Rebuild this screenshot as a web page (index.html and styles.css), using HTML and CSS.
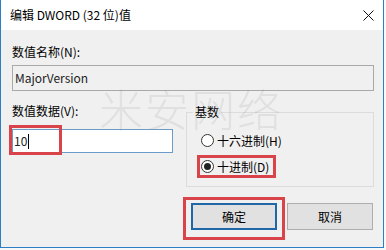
FILE: index.html
```html
<!DOCTYPE html>
<html lang="zh-CN">
<head>
    <meta charset="utf-8">
    <title>编辑 DWORD (32 位)值</title>
    <link rel="stylesheet" href="styles.css">
</head>
<body>
<div class="window">
    <div class="titlebar">
        <span class="title">编辑 DWORD (32 位)值</span>
        <svg class="close" width="11" height="11" viewBox="0 0 11 11">
            <path d="M0.5 0.5 L10.5 10.5 M10.5 0.5 L0.5 10.5" stroke="#111" stroke-width="1" fill="none"/>
        </svg>
    </div>
    <div class="content">
        <label class="field-label">数值名称(N):</label>
        <div class="textbox readonly">MajorVersion</div>
        <div class="lower">
            <div class="data-col">
                <label class="field-label">数值数据(V):</label>
                <div class="textbox focus">10<span class="caret"></span></div>
            </div>
            <fieldset class="base">
                <legend>基数</legend>
                <div class="radio"><span class="circle"></span>十六进制(H)</div>
                <div class="radio checked"><span class="circle"></span>十进制(D)</div>
            </fieldset>
        </div>
        <div class="buttons">
            <button class="btn default">确定</button>
            <button class="btn">取消</button>
        </div>
    </div>
    <div class="watermark">米安网络</div>
    <div class="mark mark-data"></div>
    <div class="mark mark-radio"></div>
    <div class="mark mark-ok"></div>
</div>
</body>
</html>
```
FILE: styles.css
```css
*{
    margin:0;
    padding:0;
    box-sizing:border-box;
}
body{
    background:#f8f8f9;
    font-family:"Noto Sans CJK SC", sans-serif;
    font-size:12px;
    color:#000;
}
.window{
    position:relative;
    width:384px;
    height:248px;
    border:1px solid #2b7fc4;
    border-top:none;
    background:#f0f0f0;
    overflow:hidden;
}
.titlebar{
    height:30px;
    background:#fff;
    display:flex;
    align-items:center;
    justify-content:space-between;
    padding:0 9px 0 9px;
}
.title{
    line-height:16px;
}
.close{
    display:block;
}
.content{
    padding:14px 9px 0 11px;
}
.field-label{
    display:block;
    line-height:16px;
}
.textbox{
    height:26px;
    margin-top:5px;
    border:1px solid #a9a9a9;
    padding-left:2px;
    line-height:24px;
    font-size:12px;
    background:#f0f0f0;
    color:#222;
}
.textbox.focus{
    height:24px;
    margin-top:10px;
    line-height:22px;
    padding-left:1px;
    background:#fff;
    border-color:#6b9cc9;
    display:flex;
    align-items:center;
}
.caret{
    display:inline-block;
    width:1px;
    height:15px;
    margin-left:1px;
    background:#000;
}
.lower{
    display:grid;
    grid-template-columns:161px 188px;
    column-gap:13px;
    margin-top:12px;
    align-items:start;
}
.base{
    margin:0;
    min-width:0;
    border:1px solid #dcdcdc;
    padding:0 0 10px 6px;
}
.base legend{
    padding:0 2px;
    line-height:18px;
}
.radio{
    display:flex;
    align-items:center;
    gap:3px;
    height:20px;
    padding-left:8px;
    margin-top:6px;
}
.radio:first-of-type{
    margin-top:9px;
}
.circle{
    width:13px;
    height:13px;
    border:1px solid #333;
    border-radius:50%;
    background:#fff;
    display:flex;
    align-items:center;
    justify-content:center;
}
.radio.checked .circle::after{
    content:"";
    width:7px;
    height:7px;
    border-radius:50%;
    background:#222;
}
.buttons{
    display:flex;
    justify-content:flex-end;
    gap:10px;
    margin-top:16px;
    padding-right:1px;
}
.btn{
    width:86px;
    height:27px;
    background:#e1e1e1;
    border:1px solid #adadad;
    font-family:"Noto Sans CJK SC", sans-serif;
    font-size:12px;
    color:#000;
}
.btn.default{
    border:2px solid #2067a8;
}
.watermark{
    position:absolute;
    left:98px;
    top:84px;
    font-size:44px;
    line-height:48px;
    letter-spacing:2px;
    font-weight:200;
    color:rgba(140, 140, 140, 0.17);
    pointer-events:none;
    white-space:nowrap;
}
.mark{
    position:absolute;
    border:3px solid #d9434a;
    pointer-events:none;
}
.mark-data{
    left:8px;
    top:125px;
    width:53px;
    height:30px;
}
.mark-radio{
    left:196px;
    top:155px;
    width:79px;
    height:23px;
}
.mark-ok{
    left:182px;
    top:197px;
    width:102px;
    height:43px;
}
```
